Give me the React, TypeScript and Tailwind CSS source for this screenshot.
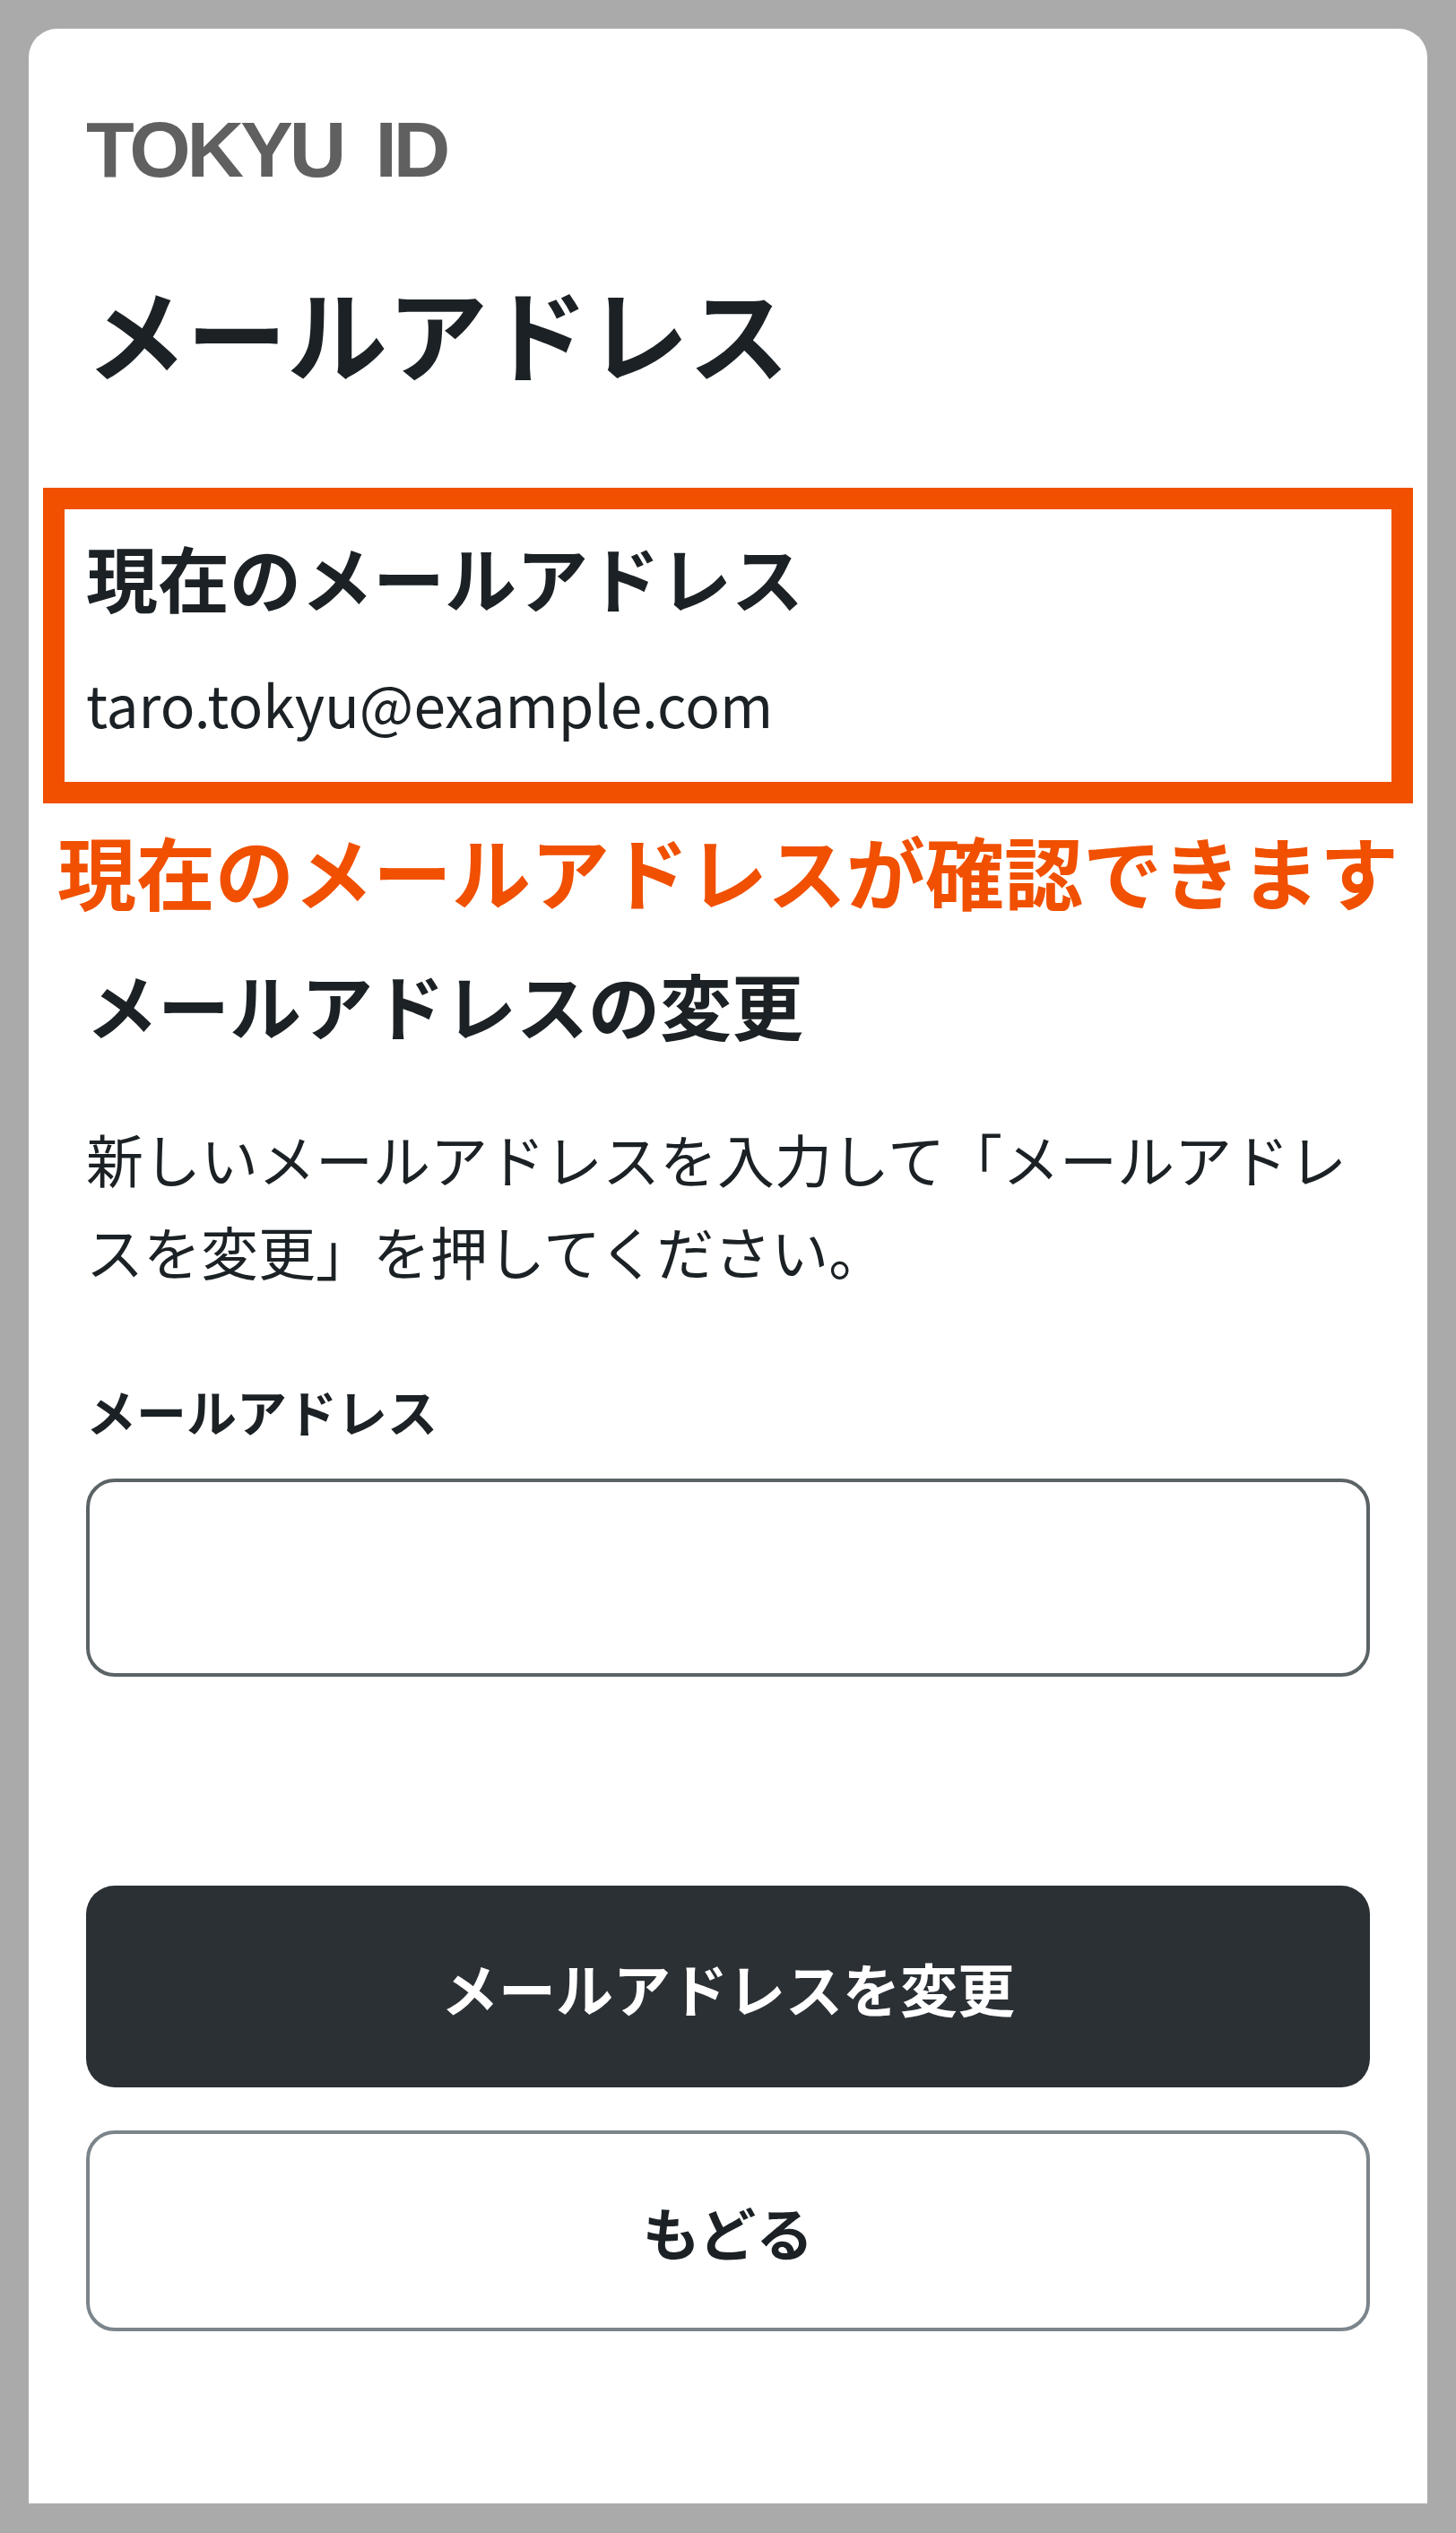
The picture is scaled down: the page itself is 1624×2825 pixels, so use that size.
import React from "react";

const jp = { fontFamily: '"Noto Sans CJK JP", "Noto Sans", sans-serif' };

export default function App() {
  return (
    <div className="min-h-[2825px] w-[1624px] bg-[#aaaaaa] px-[32px] pt-[32px] pb-[33px]" style={jp}>
      <div className="flex h-[2760px] flex-col rounded-t-[32px] bg-white px-[64px] pt-[91px] text-[#1b2124]">
        <div
          className="flex h-[88px] text-[88px] font-bold leading-[88px] tracking-[-4px] text-[#606060]"
          style={{ fontFamily: '"Liberation Sans", Arial, sans-serif' }}
        >
          <span>TOKYU</span>
          <span className="ml-[36px]">ID</span>
        </div>

        <h1 className="mt-[102px] text-[112px] font-bold leading-[112px]">メールアドレス</h1>

        <div className="-mx-[48px] mt-[119px] border-[24px] border-[#f05000] px-[24px] pt-[34px] pb-[56px]">
          <h2 className="text-[80px] font-bold leading-[80px]">現在のメールアドレス</h2>
          <p className="mt-[70px] text-[64px] leading-[64px]">taro.tokyu@example.com</p>
        </div>

        <p className="-mx-[48px] mt-[30px] whitespace-nowrap text-center text-[88px] font-bold leading-[88px] text-[#f05000]">
          現在のメールアドレスが確認できます
        </p>

        <h2 className="mt-[65px] text-[80px] font-bold leading-[80px]">メールアドレスの変更</h2>

        <p className="mt-[81px] text-[64px] leading-[103px]">
          新しいメールアドレスを入力して「メールアドレスを変更」を押してください。
        </p>

        <label className="mt-[99px] block text-[56px] font-bold leading-[56px]">メールアドレス</label>

        <input
          type="email"
          className="mt-[48px] h-[221px] w-full rounded-[32px] border-[4px] border-[#5b6366] bg-white px-[48px] text-[64px] outline-none"
        />

        <button className="mt-[233px] flex h-[225px] w-full items-center justify-center rounded-[32px] bg-[#2b3035] text-[64px] font-bold text-white">
          メールアドレスを変更
        </button>

        <button className="mt-[48px] flex h-[224px] w-full items-center justify-center rounded-[32px] border-[4px] border-[#7b858b] bg-white text-[64px] font-bold text-[#1b2124]">
          もどる
        </button>
      </div>
    </div>
  );
}
